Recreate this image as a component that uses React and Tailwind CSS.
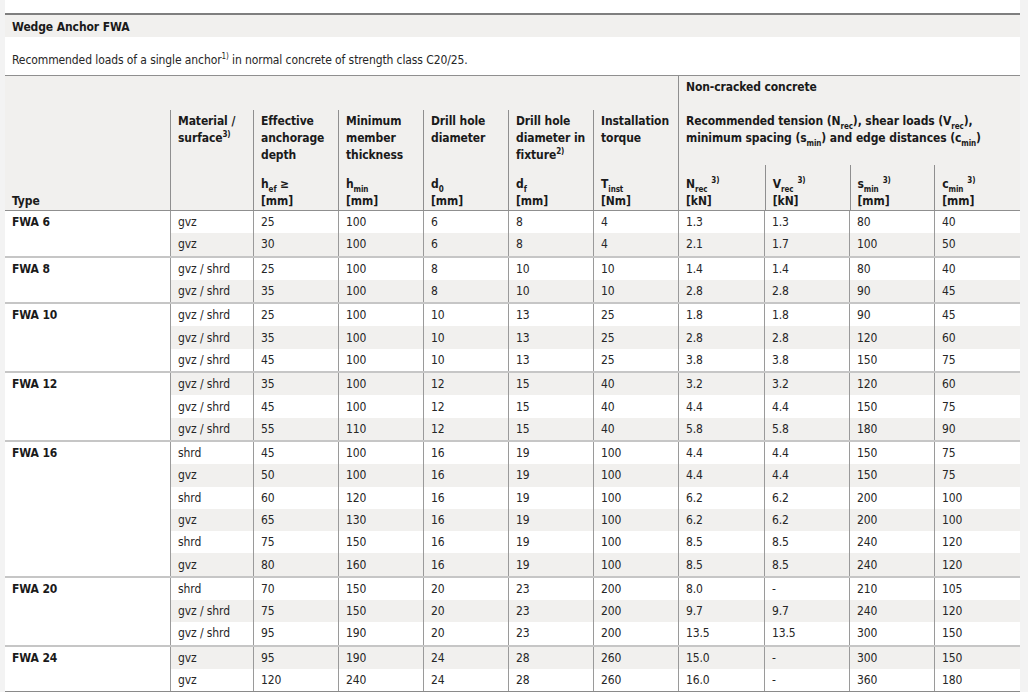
import React from 'react';

// Wedge anchor load table (FWA)

const groups = [
  { type: 'FWA 6', rows: [
    ['gvz', '25', '100', '6', '8', '4', '1.3', '1.3', '80', '40'],
    ['gvz', '30', '100', '6', '8', '4', '2.1', '1.7', '100', '50'],
  ] },
  { type: 'FWA 8', rows: [
    ['gvz / shrd', '25', '100', '8', '10', '10', '1.4', '1.4', '80', '40'],
    ['gvz / shrd', '35', '100', '8', '10', '10', '2.8', '2.8', '90', '45'],
  ] },
  { type: 'FWA 10', rows: [
    ['gvz / shrd', '25', '100', '10', '13', '25', '1.8', '1.8', '90', '45'],
    ['gvz / shrd', '35', '100', '10', '13', '25', '2.8', '2.8', '120', '60'],
    ['gvz / shrd', '45', '100', '10', '13', '25', '3.8', '3.8', '150', '75'],
  ] },
  { type: 'FWA 12', rows: [
    ['gvz / shrd', '35', '100', '12', '15', '40', '3.2', '3.2', '120', '60'],
    ['gvz / shrd', '45', '100', '12', '15', '40', '4.4', '4.4', '150', '75'],
    ['gvz / shrd', '55', '110', '12', '15', '40', '5.8', '5.8', '180', '90'],
  ] },
  { type: 'FWA 16', rows: [
    ['shrd', '45', '100', '16', '19', '100', '4.4', '4.4', '150', '75'],
    ['gvz', '50', '100', '16', '19', '100', '4.4', '4.4', '150', '75'],
    ['shrd', '60', '120', '16', '19', '100', '6.2', '6.2', '200', '100'],
    ['gvz', '65', '130', '16', '19', '100', '6.2', '6.2', '200', '100'],
    ['shrd', '75', '150', '16', '19', '100', '8.5', '8.5', '240', '120'],
    ['gvz', '80', '160', '16', '19', '100', '8.5', '8.5', '240', '120'],
  ] },
  { type: 'FWA 20', rows: [
    ['shrd', '70', '150', '20', '23', '200', '8.0', '-', '210', '105'],
    ['gvz / shrd', '75', '150', '20', '23', '200', '9.7', '9.7', '240', '120'],
    ['gvz / shrd', '95', '190', '20', '23', '200', '13.5', '13.5', '300', '150'],
  ] },
  { type: 'FWA 24', rows: [
    ['gvz', '95', '190', '24', '28', '260', '15.0', '-', '300', '150'],
    ['gvz', '120', '240', '24', '28', '260', '16.0', '-', '360', '180'],
  ] },
];

// widths of the columns after "Type"
const colW = [
  'w-[83px]', 'w-[85px]', 'w-[85px]', 'w-[85px]', 'w-[85px]', 'w-[85px]',
  'w-[86px]', 'w-[85px]', 'w-[85px]', 'w-[86px]',
];

const Sub = ({ children }) => (
  <span className="relative top-[4px] text-[8px] leading-none">{children}</span>
);

const Sup = ({ children, className = '' }) => (
  <span className={`relative -top-[5px] text-[8px] leading-none ${className}`}>{children}</span>
);

const Sym = ({ base, sub, sup, after }) => (
  <span>
    {base}
    <Sub>{sub}</Sub>
    {sup && <Sup className="ml-[4px]">{sup}</Sup>}
    {after}
  </span>
);

const HeadCol = ({ w, label, sym, unit = '[mm]' }) => (
  <div className={`${w} mt-[34px] flex flex-col whitespace-nowrap border-l border-[#8f8f8f] pl-[7px] pt-[3px]`}>
    <div className="flex-1">{label}</div>
    {sym && <div>{sym}</div>}
    {unit && <div>{unit}</div>}
  </div>
);

const SubHead = ({ w, sym, unit, first }) => (
  <div className={`${w} flex flex-col justify-end px-[7px] ${first ? '' : 'border-l border-[#8f8f8f]'}`}>
    <div>{sym}</div>
    <div>{unit}</div>
  </div>
);

export default function App() {
  let idx = 0;
  return (
    <div
      className="min-h-[692px] bg-[#f3f3f3] text-[12px] leading-[17px] tracking-[-0.1px] text-[#262626]"
      style={{ fontFamily: '"DejaVu Sans Condensed", "Liberation Sans", sans-serif' }}
    >
      <div className="ml-[5px] w-[1015px] bg-white pt-[13px]">
        <div className="h-[24px] border-t-2 border-[#7f7f7f] bg-[#f1f0ee] px-[7px] pt-[3.5px] font-bold text-[#1a1a1a]">
          Wedge Anchor FWA
        </div>
        <div className="h-[38px] px-[7px] pt-[15px]">
          Recommended loads of a single anchor<Sup>1)</Sup> in normal concrete of strength class C20/25.
        </div>

        {/* header */}
        <div className="flex h-[136px] border-y border-[#8f8f8f] bg-[#f1f0ee] font-bold text-[#1a1a1a]">
          <div className="flex w-[165px] flex-col justify-end px-[7px]">Type</div>
          <HeadCol w="w-[83px]" label={<>Material /<br />surface<Sup>3)</Sup></>} unit={null} />
          <HeadCol w="w-[85px]" label={<>Effective<br />anchorage<br />depth</>} sym={<Sym base="h" sub="ef" after=" ≥" />} />
          <HeadCol w="w-[85px]" label={<>Minimum<br />member<br />thickness</>} sym={<Sym base="h" sub="min" />} />
          <HeadCol w="w-[85px]" label={<>Drill hole<br />diameter</>} sym={<Sym base="d" sub="0" />} />
          <HeadCol w="w-[85px]" label={<>Drill hole<br />diameter in<br />fixture<Sup>2)</Sup></>} sym={<Sym base="d" sub="f" />} />
          <HeadCol w="w-[85px]" label={<>Installation<br />torque</>} sym={<Sym base="T" sub="inst" />} unit="[Nm]" />
          <div className="flex w-[342px] flex-col border-l border-[#8f8f8f]">
            <div className="px-[7px] pt-[3px]">Non-cracked concrete</div>
            <div className="mt-[17px] px-[7px]">
              Recommended tension (N<Sub>rec</Sub>), shear loads (V<Sub>rec</Sub>),<br />
              minimum spacing (s<Sub>min</Sub>) and edge distances (c<Sub>min</Sub>)
            </div>
            <div className="mt-auto flex h-[45px]">
              <SubHead w="w-[86px]" first sym={<Sym base="N" sub="rec" sup="3)" />} unit="[kN]" />
              <SubHead w="w-[85px]" sym={<Sym base="V" sub="rec" sup="3)" />} unit="[kN]" />
              <SubHead w="w-[85px]" sym={<Sym base="s" sub="min" sup="3)" />} unit="[mm]" />
              <SubHead w="w-[86px]" sym={<Sym base="c" sub="min" sup="3)" />} unit="[mm]" />
            </div>
          </div>
        </div>

        {/* body */}
        <div className="border-b-2 border-[#8a8a8a]">
          {groups.map((g, gi) => (
            <div key={g.type} className={`flex ${gi > 0 ? 'border-t-2 border-[#c6c6c6]' : ''}`}>
              <div className="w-[165px] bg-white px-[7px] font-bold text-[#1a1a1a]">
                <div className="flex h-[22.3px] items-center pt-[1px]">{g.type}</div>
              </div>
              <div className="flex flex-col">
                {g.rows.map((r) => {
                  const odd = idx++ % 2 === 1;
                  return (
                    <div key={idx} className={`flex h-[22.3px] ${odd ? 'bg-[#f1f0ee]' : 'bg-white'}`}>
                      {r.map((v, ci) => (
                        <div key={ci} className={`${colW[ci]} flex items-center border-l border-[#9a9a9a] px-[7px] pt-[1px]`}>
                          {v}
                        </div>
                      ))}
                    </div>
                  );
                })}
              </div>
            </div>
          ))}
        </div>
      </div>
    </div>
  );
}
